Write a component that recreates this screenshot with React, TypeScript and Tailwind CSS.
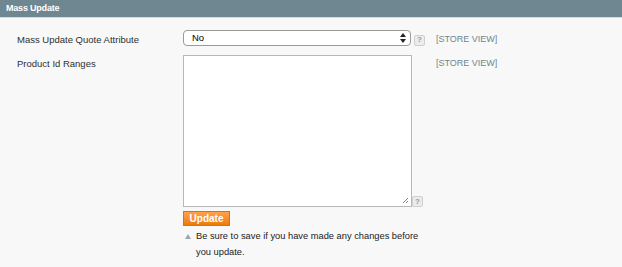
import React from "react";

function Help() {
  return (
    <span className="inline-flex items-center justify-center w-[11px] h-[11px] border border-[#cfcfcf] rounded-[2px] bg-[#ececec] text-[#9a9a9a] text-[8px] font-bold leading-none" style={{ fontFamily: '"Liberation Sans", Arial, sans-serif' }}>?</span>
  );
}

export default function App() {
  return (
    <div className="w-[622px] h-[267px] bg-[#f8f8f8] text-[#2f2f2f] text-[9.5px]" style={{ fontFamily: '"Liberation Sans", Arial, sans-serif' }}>
      <div className="h-[18px] bg-[#6f8790] border-b border-[#d6dde0] pl-[6px] flex items-center">
        <span className="text-white font-bold text-[9px] leading-none tracking-[-0.2px]">Mass Update</span>
      </div>
      <div className="pl-[17px] pt-[12px] relative">
        <div className="flex items-start h-[20px]">
          <div className="w-[166px] pt-[3px] text-[9.5px]">Mass Update Quote Attribute</div>
          <div className="w-[228px] h-[16px] border border-[#9a9a9a] rounded-[4px] bg-white flex items-center justify-between pl-[8px] pr-[4px]">
            <span className="text-[9.5px] text-black">No</span>
            <svg width="6" height="10" viewBox="0 0 6 10"><path d="M3 0 L6 4 H0Z M0 6 H6 L3 10Z" fill="#222" /></svg>
          </div>
          <div className="ml-[3px] mt-[2px]"><Help /></div>
          <div className="ml-[11px] pt-[3px] text-[#6d8790] text-[9px]">[STORE VIEW]</div>
        </div>
        <div className="flex items-start mt-[5px]">
          <div className="w-[166px] pt-[2px] text-[9.5px]">Product Id Ranges</div>
          <div className="flex flex-col w-[253px] shrink-0">
            <div className="flex items-end">
              <div className="w-[229px] h-[152px] border border-[#b8b8b8] bg-white relative">
                <svg className="absolute right-[2px] bottom-[2px]" width="7" height="7" viewBox="0 0 7 7"><path d="M6 1 L1 6 M6 4 L4 6" stroke="#888" strokeWidth="1" /></svg>
              </div>
              <div className="ml-[0px] -mb-[1px]"><Help /></div>
            </div>
            <div className="mt-[4px] w-[47px] h-[15px] bg-gradient-to-b from-[#ffa14a] to-[#ee7a00] border border-[#e07000] text-white font-bold text-[10px] flex items-center justify-center leading-none">Update</div>
            <div className="flex items-start mt-[2px]">
              <svg className="mt-[6px] ml-[2px] mr-[5px] shrink-0" width="6" height="5" viewBox="0 0 6 5"><path d="M3 0 L6 5 H0Z" fill="#9aa8ae" /></svg>
              <div className="w-[226px] text-[9.3px] leading-[16px] text-[#222]">Be sure to save if you have made any changes before you update.</div>
            </div>
          </div>
          <div className="pt-[2px] text-[#6d8790] text-[9px]">[STORE VIEW]</div>
        </div>
      </div>
    </div>
  );
}
